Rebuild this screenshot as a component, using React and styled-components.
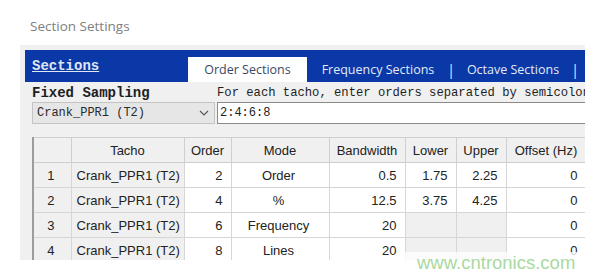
import styled, { createGlobalStyle } from 'styled-components';

const Global = createGlobalStyle`
  html, body {
    margin: 0;
    padding: 0;
    background: #ffffff;
  }
  body {
    width: 600px;
    height: 273px;
    overflow: hidden;
    position: relative;
  }
`;

const Window = styled.div`
  width: 600px;
  height: 273px;
  position: relative;
`;

const Title = styled.div`
  height: 45px;
  padding-left: 30px;
  padding-top: 6px;
  display: flex;
  align-items: center;
  font-family: "Open Sans", "Noto Sans", sans-serif;
  font-size: 13.5px;
  color: #808080;
  box-sizing: border-box;
`;

const Panel = styled.div`
  margin-left: 20px;
  width: 565px;
  height: 215px;
  background: #f0f0f0;
  padding: 5px 0 0 5px;
  box-sizing: border-box;
  overflow: hidden;
`;

const TabBar = styled.div`
  height: 32px;
  background: #0a38a6;
  display: flex;
  align-items: flex-end;
`;

const BarLabel = styled.div`
  width: 163px;
  align-self: center;
  padding-left: 7px;
  box-sizing: border-box;
  font-family: "Liberation Mono", monospace;
  font-weight: bold;
  font-size: 14px;
  color: #dfe6f4;
  text-decoration: underline;
`;

const Tab = styled.div`
  height: 25px;
  display: flex;
  align-items: center;
  justify-content: center;
  font-family: "Open Sans", "Noto Sans", sans-serif;
  font-size: 12.5px;
  width: ${p => p.$w}px;
  background: ${p => (p.$active ? '#ffffff' : 'transparent')};
  color: ${p => (p.$active ? '#3a4866' : '#e4eaf8')};
`;

const Pipe = styled.div`
  height: 25px;
  display: flex;
  align-items: center;
  font-family: "Open Sans", sans-serif;
  font-size: 14px;
  color: #e4eaf8;
  width: ${p => p.$w}px;
  justify-content: center;
`;

const Body = styled.div`
  padding-left: 7px;
`;

const SamplingRow = styled.div`
  display: grid;
  grid-template-columns: 185px 1fr;
  height: 20px;
  align-items: end;
`;

const MonoLabel = styled.div`
  font-family: "Liberation Mono", monospace;
  font-size: ${p => (p.$bold ? 14 : 12.2)}px;
  font-weight: ${p => (p.$bold ? 'bold' : 'normal')};
  color: #1e1e1e;
  white-space: nowrap;
  overflow: hidden;
  line-height: 18px;
`;

const InputRow = styled.div`
  display: grid;
  grid-template-columns: 183px 1fr;
  column-gap: 2px;
  height: 22px;
`;

const Combo = styled.div`
  background: #e6e6e6;
  border: 1px solid #c4c4c4;
  display: flex;
  align-items: center;
  justify-content: space-between;
  padding: 0 5px 0 4px;
  font-family: "Liberation Mono", monospace;
  font-size: 12px;
  color: #2a2a2a;
`;

const TextBox = styled.div`
  background: #ffffff;
  border: 1px solid #8a8a8a;
  border-right: none;
  display: flex;
  align-items: center;
  padding-left: 2px;
  font-family: "Liberation Mono", monospace;
  font-size: 12px;
  color: #1e1e1e;
`;

const Grid = styled.table`
  margin-top: 13px;
  border-collapse: collapse;
  table-layout: fixed;
  width: 553px;
  border-top: 1px solid #a6a6a6;
  border-left: 2px solid #9c9c9c;
  font-family: "Liberation Sans", Arial, sans-serif;
  font-size: 13px;
  color: #222;
`;

const Head = styled.th`
  height: 24px;
  padding: 0;
  font-weight: normal;
  background: #f0f0f0;
  border: 1px solid #cfcfcf;
  text-align: center;
`;

const Cell = styled.td`
  height: 24px;
  padding: 0 8px 0 5px;
  border: 1px solid #d6d6d6;
  white-space: nowrap;
  overflow: hidden;
  text-align: ${p => p.$align || 'right'};
  background: ${p => (p.$gray ? '#f0f0f0' : '#ffffff')};
`;

const Watermark = styled.div`
  position: absolute;
  left: 400px;
  top: 252px;
  width: 200px;
  height: 21px;
  background: rgba(255, 255, 255, 0.75);
  display: flex;
  align-items: center;
  padding-left: 17px;
  box-sizing: border-box;
  font-family: "Liberation Sans", Arial, sans-serif;
  font-size: 18.5px;
  color: #a9d9a0;
`;

const cols = [38, 113, 47, 98, 76, 51, 50, 80];

const rows = [
  { n: 1, order: 2, mode: 'Order', bw: '0.5', lo: '1.75', up: '2.25' },
  { n: 2, order: 4, mode: '%', bw: '12.5', lo: '3.75', up: '4.25' },
  { n: 3, order: 6, mode: 'Frequency', bw: '20', lo: null, up: null },
  { n: 4, order: 8, mode: 'Lines', bw: '20', lo: null, up: null },
];

export default function App() {
  return (
    <Window>
      <Global />
      <Title>Section Settings</Title>
      <Panel>
        <TabBar>
          <BarLabel>Sections</BarLabel>
          <Tab $active $w={119}>Order Sections</Tab>
          <Tab $w={142}>Frequency Sections</Tab>
          <Pipe $w={4}>|</Pipe>
          <Tab $w={120}>Octave Sections</Tab>
          <Pipe $w={4}>|</Pipe>
        </TabBar>
        <Body>
          <SamplingRow>
            <MonoLabel $bold>Fixed Sampling</MonoLabel>
            <MonoLabel>For each tacho, enter orders separated by semicolons</MonoLabel>
          </SamplingRow>
          <InputRow>
            <Combo>
              <span>Crank_PPR1 (T2)</span>
              <svg width="10" height="6" viewBox="0 0 10 6">
                <polyline points="1,1 5,5 9,1" fill="none" stroke="#555" strokeWidth="1.1" />
              </svg>
            </Combo>
            <TextBox>2:4:6:8</TextBox>
          </InputRow>
          <Grid>
            <colgroup>
              {cols.map((w, i) => <col key={i} style={{ width: w }} />)}
            </colgroup>
            <thead>
              <tr>
                <Head />
                <Head>Tacho</Head>
                <Head>Order</Head>
                <Head>Mode</Head>
                <Head>Bandwidth</Head>
                <Head>Lower</Head>
                <Head>Upper</Head>
                <Head>Offset (Hz)</Head>
              </tr>
            </thead>
            <tbody>
              {rows.map(r => (
                <tr key={r.n}>
                  <Cell $gray $align="center">{r.n}</Cell>
                  <Cell $gray $align="left">Crank_PPR1 (T2)</Cell>
                  <Cell>{r.order}</Cell>
                  <Cell $align="center">{r.mode}</Cell>
                  <Cell>{r.bw}</Cell>
                  <Cell $gray={r.lo === null}>{r.lo}</Cell>
                  <Cell $gray={r.up === null}>{r.up}</Cell>
                  <Cell>0</Cell>
                </tr>
              ))}
            </tbody>
          </Grid>
        </Body>
      </Panel>
      <Watermark>www.cntronics.com</Watermark>
    </Window>
  );
}
